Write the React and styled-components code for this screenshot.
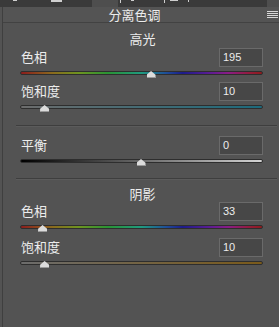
import React from "react";
import styled, { createGlobalStyle } from "styled-components";

const Global = createGlobalStyle`
  html, body { margin: 0; padding: 0; background: #535353; overflow: hidden; }
  #root { width: 279px; height: 327px; }
`;

const Frame = styled.div`
  width: 279px;
  height: 327px;
  display: flex;
  flex-direction: column;
  background: #535353;
  font-family: "Noto Sans CJK SC", "Noto Sans", sans-serif;
  color: #e6e6e6;
  overflow: hidden;
`;

const TabStrip = styled.div`
  height: 7px;
  display: flex;
  background: #4e4e4e;
  flex: none;
`;

const Tab = styled.div`
  width: ${(p) => p.$w}px;
  margin-left: ${(p) => p.$ml || 0}px;
  height: 7px;
  background: #3a3a3a;
  display: flex;
  align-items: flex-start;
`;

const Bit = styled.i`
  display: block;
  margin-left: ${(p) => p.$ml}px;
  width: ${(p) => p.$w}px;
  height: ${(p) => p.$h}px;
  background: #cfcfcf;
`;

const Body = styled.div`
  flex: 1;
  display: flex;
  border-left: 1px solid #3f3f3f;
  margin-left: 2px;
  flex-direction: column;
`;

const Header = styled.div`
  height: 15px;
  display: flex;
  align-items: center;
  position: relative;
  border-bottom: 1px solid #424242;
  background: #545454;
  flex: none;
`;

const Title = styled.div`
  font-size: 13px;
  line-height: 15px;
  width: 100%;
  text-align: center;
  padding-right: 13px;
  box-sizing: border-box;
  color: #ececec;
`;

const Menu = styled.div`
  position: absolute;
  right: 1px;
  top: 4px;
  width: 11px;
  display: flex;
  flex-direction: column;
  gap: 1px;
  & > i {
    display: block;
    height: 1px;
    background: #d8d8d8;
  }
`;

const Content = styled.div`
  display: flex;
  flex-direction: column;
  padding: 0 16px 0 17px;
`;

const Heading = styled.div`
  font-size: 13px;
  line-height: 16px;
  text-align: center;
  margin-top: ${(p) => p.$mt}px;
  padding-left: 2px;
  color: #ececec;
`;

const Control = styled.div`
  display: flex;
  flex-direction: column;
  margin-top: ${(p) => p.$mt}px;
`;

const LabelRow = styled.div`
  display: flex;
  align-items: center;
  justify-content: space-between;
  height: 19px;
`;

const Label = styled.span`
  font-size: 13px;
  line-height: 16px;
  padding-left: 1px;
  margin-bottom: 2px;
  color: #ececec;
`;

const Field = styled.div`
  width: 44px;
  height: 19px;
  box-sizing: border-box;
  border: 1px solid #6a6a6a;
  background: #474747;
  font-family: "Liberation Sans", "Noto Sans", sans-serif;
  font-size: 11px;
  line-height: 17px;
  padding-left: 3px;
  color: #ececec;
`;

const Track = styled.div`
  position: relative;
  margin-top: 4px;
  height: 4px;
  box-sizing: border-box;
  border: 1px solid #2e2e2e;
  border-radius: 2px;
  background: ${(p) => p.$bg};
`;

const Thumb = styled.div`
  position: absolute;
  top: -1px;
  width: 9px;
  height: 7px;
  margin-left: -5px;
  background: #dcdcdc;
  clip-path: polygon(50% 0, 100% 55%, 100% 100%, 0 100%, 0 55%);
  border-bottom: 1px solid #9a9a9a;
  box-sizing: border-box;
`;

const Divider = styled.div`
  height: 1px;
  background: #3e3e3e;
  margin: ${(p) => p.$mt}px -14px 0 -4px;
  border-bottom: 1px solid #5b5b5b;
`;

const HUE =
  "linear-gradient(to right, #8c1c1c 0%, #8a6a1e 13%, #6e9420 24%, #2a9434 36%, #1f9a80 50%, #1e4f98 60%, #1c1c8a 67%, #5a1c94 78%, #8a1c86 86%, #941c3a 95%, #8c1c1c 100%)";

function Slider({ label, value, frac, bg, mt }) {
  return (
    <Control $mt={mt}>
      <LabelRow>
        <Label>{label}</Label>
        <Field>{value}</Field>
      </LabelRow>
      <Track $bg={bg}>
        <Thumb style={{ left: `${frac * 100}%` }} />
      </Track>
    </Control>
  );
}

export default function App() {
  return (
    <Frame>
      <Global />
      <TabStrip>
        <Tab $w={92}>
          <Bit $ml={13} $w={4} $h={1} />
          <Bit $ml={34} $w={11} $h={2} />
        </Tab>
        <Tab $w={149} $ml={26}>
          <Bit $ml={2} $w={1} $h={3} />
          <Bit $ml={10} $w={3} $h={1} />
          <Bit $ml={30} $w={1} $h={3} />
          <Bit $ml={5} $w={8} $h={1} />
          <Bit $ml={10} $w={1} $h={2} />
        </Tab>
      </TabStrip>
      <Body>
        <Header>
          <Title>分离色调</Title>
          <Menu>
            <i />
            <i />
            <i />
            <i />
          </Menu>
        </Header>
        <Content>
          <Heading $mt={8}>高光</Heading>
          <Slider label="色相" value="195" frac={195 / 360} bg={HUE} mt={1} />
          <Slider
            label="饱和度"
            value="10"
            frac={0.1}
            bg="linear-gradient(to right, #6c6c6c, #1c6a7c)"
            mt={7}
          />
          <Divider $mt={16} />
          <Slider
            label="平衡"
            value="0"
            frac={0.5}
            bg="linear-gradient(to right, #000000, #d4d4d4)"
            mt={9}
          />
          <Divider $mt={15} />
          <Heading $mt={6}>阴影</Heading>
          <Slider label="色相" value="33" frac={33 / 360} bg={HUE} mt={0} />
          <Slider
            label="饱和度"
            value="10"
            frac={0.1}
            bg="linear-gradient(to right, #6c6c6c, #7a5a1a)"
            mt={9}
          />
        </Content>
      </Body>
    </Frame>
  );
}
